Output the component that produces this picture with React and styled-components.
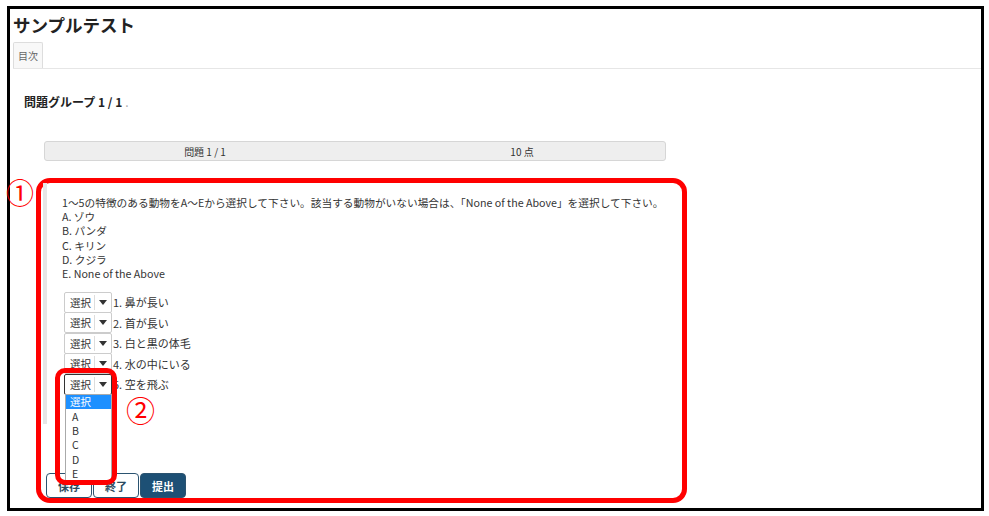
import React from "react";
import styled, { createGlobalStyle } from "styled-components";

const GlobalStyle = createGlobalStyle`
  html, body {
    margin: 0;
    padding: 0;
    background: #fff;
  }
  body {
    font-family: "Noto Sans CJK JP", "Noto Sans", sans-serif;
    color: #333;
  }
`;

const Frame = styled.div`
  box-sizing: border-box;
  margin: 6px 0 0 7px;
  width: 977px;
  height: 505px;
  border: 3px solid #000;
  padding-left: 3px;
`;

const Title = styled.h1`
  margin: 4px 0 0 0;
  font-size: 17.5px;
  line-height: 24px;
  font-weight: 700;
  color: #222;
`;

const TabBar = styled.div`
  margin-top: 5px;
  display: flex;
  border-bottom: 1px solid #e6e6e6;
`;

const Tab = styled.div`
  height: 25px;
  padding: 0 4px;
  border: 1px solid #ddd;
  border-bottom: none;
  border-radius: 2px 2px 0 0;
  background: #f8f8f8;
  font-size: 10px;
  line-height: 25px;
  color: #666;
`;

const GroupHeading = styled.h2`
  margin: 25px 0 0 11px;
  font-size: 12px;
  line-height: 16px;
  font-weight: 700;
  color: #222;

  span {
    font-weight: 400;
    color: #aaa;
    margin-left: 3px;
  }
`;

const ScoreBar = styled.div`
  box-sizing: border-box;
  margin: 31px 0 0 31px;
  width: 622px;
  height: 20px;
  display: grid;
  grid-template-columns: 320px 1fr;
  align-items: center;
  background: #eee;
  border: 1px solid #d6d6d6;
  border-radius: 3px;
  font-size: 10px;
  color: #333;
  text-align: center;
`;

const ScoreCell = styled.div`
  padding-left: ${(p) => p.$shift || 0}px;
`;

const Callout = styled.div`
  position: relative;
  box-sizing: border-box;
  margin: 17px 0 0 23px;
  width: 651px;
  height: 325px;
  border: 5px solid #ff0000;
  border-radius: 14px;
`;

const Marker = styled.div`
  position: absolute;
  left: ${(p) => p.$x}px;
  top: ${(p) => p.$y}px;
  font-family: "DejaVu Serif", "Noto Sans CJK JP", serif;
  font-size: ${(p) => p.$size}px;
  line-height: 1;
  color: #ff0000;
`;

const QuestionPanel = styled.div`
  box-sizing: border-box;
  margin-left: 2px;
  height: 241px;
  border-left: 4px solid #e6e6e6;
  padding: 13px 0 0 15px;
`;

const Prompt = styled.div`
  font-size: 10.7px;
  line-height: 14.2px;
  color: #333;
  white-space: nowrap;
`;

const SelectList = styled.div`
  margin: 11px 0 0 2px;
`;

const SelectRow = styled.div`
  position: relative;
  height: 20.5px;
  display: flex;
  align-items: center;
`;

const SelectBox = styled.div`
  box-sizing: border-box;
  width: 48px;
  height: 21px;
  display: flex;
  align-items: center;
  background: #fff;
  border: 1px solid ${(p) => (p.$focused ? "#333" : "#ccc")};
  border-radius: 2px;
  font-size: 10.5px;
  color: #333;
`;

const SelectValue = styled.div`
  width: 30px;
  padding-left: 5px;
  box-sizing: border-box;
  border-right: 1px solid #ddd;
  line-height: 15px;
`;

const Arrow = styled.div`
  margin-left: 4px;
  width: 0;
  height: 0;
  border-left: 4px solid transparent;
  border-right: 4px solid transparent;
  border-top: 5px solid #333;
`;

const Label = styled.span`
  margin-left: 1px;
  font-size: 11px;
  color: #333;
`;

const Dropdown = styled.ul`
  position: absolute;
  top: 20px;
  left: 1px;
  box-sizing: border-box;
  width: 47px;
  height: 88px;
  margin: 0;
  padding: 0;
  list-style: none;
  background: #fff;
  border: 1px solid #aaa;
  z-index: 2;
`;

const Option = styled.li`
  height: 14.2px;
  line-height: 14.2px;
  padding-left: ${(p) => (p.$active ? 4 : 6)}px;
  font-size: 10.5px;
  color: ${(p) => (p.$active ? "#fff" : "#333")};
  background: ${(p) => (p.$active ? "#1e90ff" : "transparent")};
  margin-bottom: ${(p) => (p.$active ? 0.6 : 0)}px;
`;

const HighlightRing = styled.div`
  position: absolute;
  left: -9px;
  top: -6px;
  box-sizing: border-box;
  width: 62px;
  height: 117px;
  border: 5px solid #ff0000;
  border-radius: 10px;
  z-index: 3;
`;

const ButtonRow = styled.div`
  margin: 49px 0 0 5px;
  display: flex;
  gap: 1px;
`;

const Button = styled.button`
  box-sizing: border-box;
  width: 46px;
  height: 25px;
  padding: 0;
  border: 1px solid #2b5370;
  border-radius: 4px;
  background: ${(p) => (p.$primary ? "#1d5075" : "#fff")};
  color: ${(p) => (p.$primary ? "#fff" : "#2b4a60")};
  font-family: "Noto Sans CJK JP", sans-serif;
  font-size: 11px;
  font-weight: 700;
`;

const options = ["選択", "A", "B", "C", "D", "E"];

const items = [
  "1. 鼻が長い",
  "2. 首が長い",
  "3. 白と黒の体毛",
  "4. 水の中にいる",
  "5. 空を飛ぶ",
];

export default function App() {
  return (
    <>
      <GlobalStyle />
      <Frame>
        <Title>サンプルテスト</Title>
        <TabBar>
          <Tab>目次</Tab>
        </TabBar>
        <GroupHeading>
          問題グループ 1 / 1<span>.</span>
        </GroupHeading>
        <ScoreBar>
          <ScoreCell>問題 1 / 1</ScoreCell>
          <ScoreCell $shift={14}>10 点</ScoreCell>
        </ScoreBar>

        <Callout>
          <Marker $x={-35} $y={-2} $size={28}>①</Marker>
          <QuestionPanel>
            <Prompt>
              1～5の特徴のある動物をA～Eから選択して下さい。該当する動物がいない場合は、「None of the Above」を選択して下さい。
            </Prompt>
            <Prompt>A. ゾウ</Prompt>
            <Prompt>B. パンダ</Prompt>
            <Prompt>C. キリン</Prompt>
            <Prompt>D. クジラ</Prompt>
            <Prompt>E. None of the Above</Prompt>

            <SelectList>
              {items.map((label, i) => {
                const open = i === items.length - 1;
                return (
                  <SelectRow key={label}>
                    <SelectBox $focused={open}>
                      <SelectValue>選択</SelectValue>
                      <Arrow />
                    </SelectBox>
                    <Label>{label}</Label>
                    {open && (
                      <>
                        <Dropdown>
                          {options.map((o, j) => (
                            <Option key={o} $active={j === 0}>
                              {o}
                            </Option>
                          ))}
                        </Dropdown>
                        <HighlightRing />
                        <Marker $x={62} $y={24} $size={29}>②</Marker>
                      </>
                    )}
                  </SelectRow>
                );
              })}
            </SelectList>
          </QuestionPanel>

          <ButtonRow>
            <Button>保存</Button>
            <Button>終了</Button>
            <Button $primary>提出</Button>
          </ButtonRow>
        </Callout>
      </Frame>
    </>
  );
}
